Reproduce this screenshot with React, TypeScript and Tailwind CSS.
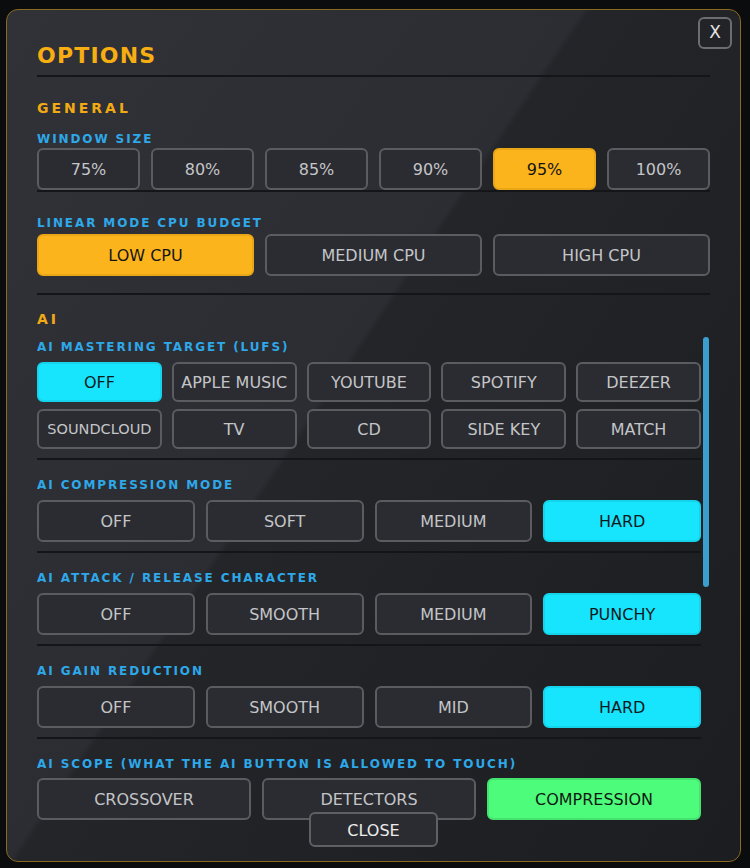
import React from "react";

type Opt = { label: string; active?: boolean; small?: boolean };

const FONT = "font-['DejaVu_Sans',sans-serif]";

function Btn({ o, tone, h }: { o: Opt; tone: "gold" | "cyan" | "green"; h: string }) {
  const activeCls =
    tone === "gold"
      ? "bg-[#fcb41d] border-[#e9a616] text-[#141414]"
      : tone === "cyan"
      ? "bg-[#17e5fe] border-[#14d3ea] text-[#0f1a1d]"
      : "bg-[#4dfc7b] border-[#45e26f] text-[#0f1a12]";
  return (
    <div
      className={
        "flex items-center justify-center pt-[2px] rounded-[6px] border-2 " +
        h +
        " " +
        (o.small ? "text-[14.5px] " : "text-[16px] ") +
        (o.active ? activeCls : "bg-[#2b2c31] border-[#5a5c60] text-[#c4c5c8]")
      }
    >
      {o.label}
    </div>
  );
}

function Label({ children, className = "" }: { children: React.ReactNode; className?: string }) {
  return (
    <div className={"text-[12px] leading-[14px] font-bold tracking-[1.9px] text-[#2ea8e9] " + className}>
      {children}
    </div>
  );
}

function Divider({ className = "" }: { className?: string }) {
  return <div className={"h-[2px] bg-[#141518] " + className} />;
}

export default function App() {
  const sizes: Opt[] = [
    { label: "75%" },
    { label: "80%" },
    { label: "85%" },
    { label: "90%" },
    { label: "95%", active: true },
    { label: "100%" },
  ];
  const cpu: Opt[] = [{ label: "LOW CPU", active: true }, { label: "MEDIUM CPU" }, { label: "HIGH CPU" }];
  const targets: Opt[] = [
    { label: "OFF", active: true },
    { label: "APPLE MUSIC" },
    { label: "YOUTUBE" },
    { label: "SPOTIFY" },
    { label: "DEEZER" },
    { label: "SOUNDCLOUD", small: true },
    { label: "TV" },
    { label: "CD" },
    { label: "SIDE KEY" },
    { label: "MATCH" },
  ];
  const comp: Opt[] = [{ label: "OFF" }, { label: "SOFT" }, { label: "MEDIUM" }, { label: "HARD", active: true }];
  const attack: Opt[] = [{ label: "OFF" }, { label: "SMOOTH" }, { label: "MEDIUM" }, { label: "PUNCHY", active: true }];
  const gain: Opt[] = [{ label: "OFF" }, { label: "SMOOTH" }, { label: "MID" }, { label: "HARD", active: true }];
  const scope: Opt[] = [{ label: "CROSSOVER" }, { label: "DETECTORS" }, { label: "COMPRESSION", active: true }];

  return (
    <div className={"w-[750px] h-[868px] overflow-hidden bg-[#0b0c0e] " + FONT}>
      <div className="relative ml-[6px] mt-[9px] w-[735px] h-[853px] rounded-[12px] border border-[#8a6a1e] bg-[linear-gradient(124deg,#303237_0%,#2b2d32_44%,#232529_44.6%,#1c1d21_100%)] overflow-hidden">
        {/* close X */}
        <div className="absolute top-[7px] right-[8px] w-[34px] h-[32px] rounded-[6px] border-2 border-[#6b6d71] flex items-center justify-center text-[17px] text-[#e2e2e2]">
          X
        </div>

        <div className="px-[30px] pt-[33px]">
          <div className="text-[22px] leading-[26px] font-bold tracking-[1.2px] text-[#f7ae12]">OPTIONS</div>
          <Divider className="mt-[6px]" />

          <div className="mt-[23px] text-[14px] leading-[16px] font-bold tracking-[3px] text-[#f2aa14]">GENERAL</div>
          <Label className="mt-[16px]">WINDOW SIZE</Label>
          <div className="mt-[2px] grid grid-cols-6 gap-[11px]">
            {sizes.map((o) => (
              <Btn key={o.label} o={o} tone="gold" h="h-[42px]" />
            ))}
          </div>
          <Divider />
          <Label className="mt-[24px]">LINEAR MODE CPU BUDGET</Label>
          <div className="mt-[4px] grid grid-cols-3 gap-[11px]">
            {cpu.map((o) => (
              <Btn key={o.label} o={o} tone="gold" h="h-[42px]" />
            ))}
          </div>
          <Divider className="mt-[17px]" />

          {/* scroll area */}
          <div className="relative h-[525px] overflow-hidden pr-[9px]">
            <div className="absolute right-[1px] top-[42px] w-[6px] h-[250px] rounded-full bg-[#3a9fcd]" />
            <div className="pt-[16px] text-[14px] leading-[16px] font-bold tracking-[3px] text-[#f2aa14]">AI</div>

            <Label className="mt-[13px]">AI MASTERING TARGET (LUFS)</Label>
            <div className="mt-[8px] grid grid-cols-5 gap-x-[10px] gap-y-[7px]">
              {targets.map((o) => (
                <Btn key={o.label} o={o} tone="cyan" h="h-[40px]" />
              ))}
            </div>
            <Divider className="mt-[9px]" />

            <Label className="mt-[18px]">AI COMPRESSION MODE</Label>
            <div className="mt-[8px] grid grid-cols-4 gap-[11px]">
              {comp.map((o) => (
                <Btn key={o.label} o={o} tone="cyan" h="h-[42px]" />
              ))}
            </div>
            <Divider className="mt-[9px]" />

            <Label className="mt-[18px]">AI ATTACK / RELEASE CHARACTER</Label>
            <div className="mt-[8px] grid grid-cols-4 gap-[11px]">
              {attack.map((o) => (
                <Btn key={o.label} o={o} tone="cyan" h="h-[42px]" />
              ))}
            </div>
            <Divider className="mt-[9px]" />

            <Label className="mt-[18px]">AI GAIN REDUCTION</Label>
            <div className="mt-[8px] grid grid-cols-4 gap-[11px]">
              {gain.map((o) => (
                <Btn key={o.label} o={o} tone="cyan" h="h-[42px]" />
              ))}
            </div>
            <Divider className="mt-[9px]" />

            <Label className="mt-[18px]">AI SCOPE (WHAT THE AI BUTTON IS ALLOWED TO TOUCH)</Label>
            <div className="mt-[7px] grid grid-cols-3 gap-[11px]">
              {scope.map((o) => (
                <Btn key={o.label} o={o} tone="green" h="h-[42px]" />
              ))}
            </div>
          </div>

          <div className="relative z-10 -mt-[8px] flex justify-center">
            <div className="w-[129px] h-[35px] pt-[2px] rounded-[6px] border-2 border-[#5e6064] bg-[#2b2c31] flex items-center justify-center text-[16px] text-[#ececec]">
              CLOSE
            </div>
          </div>
        </div>
      </div>
    </div>
  );
}
